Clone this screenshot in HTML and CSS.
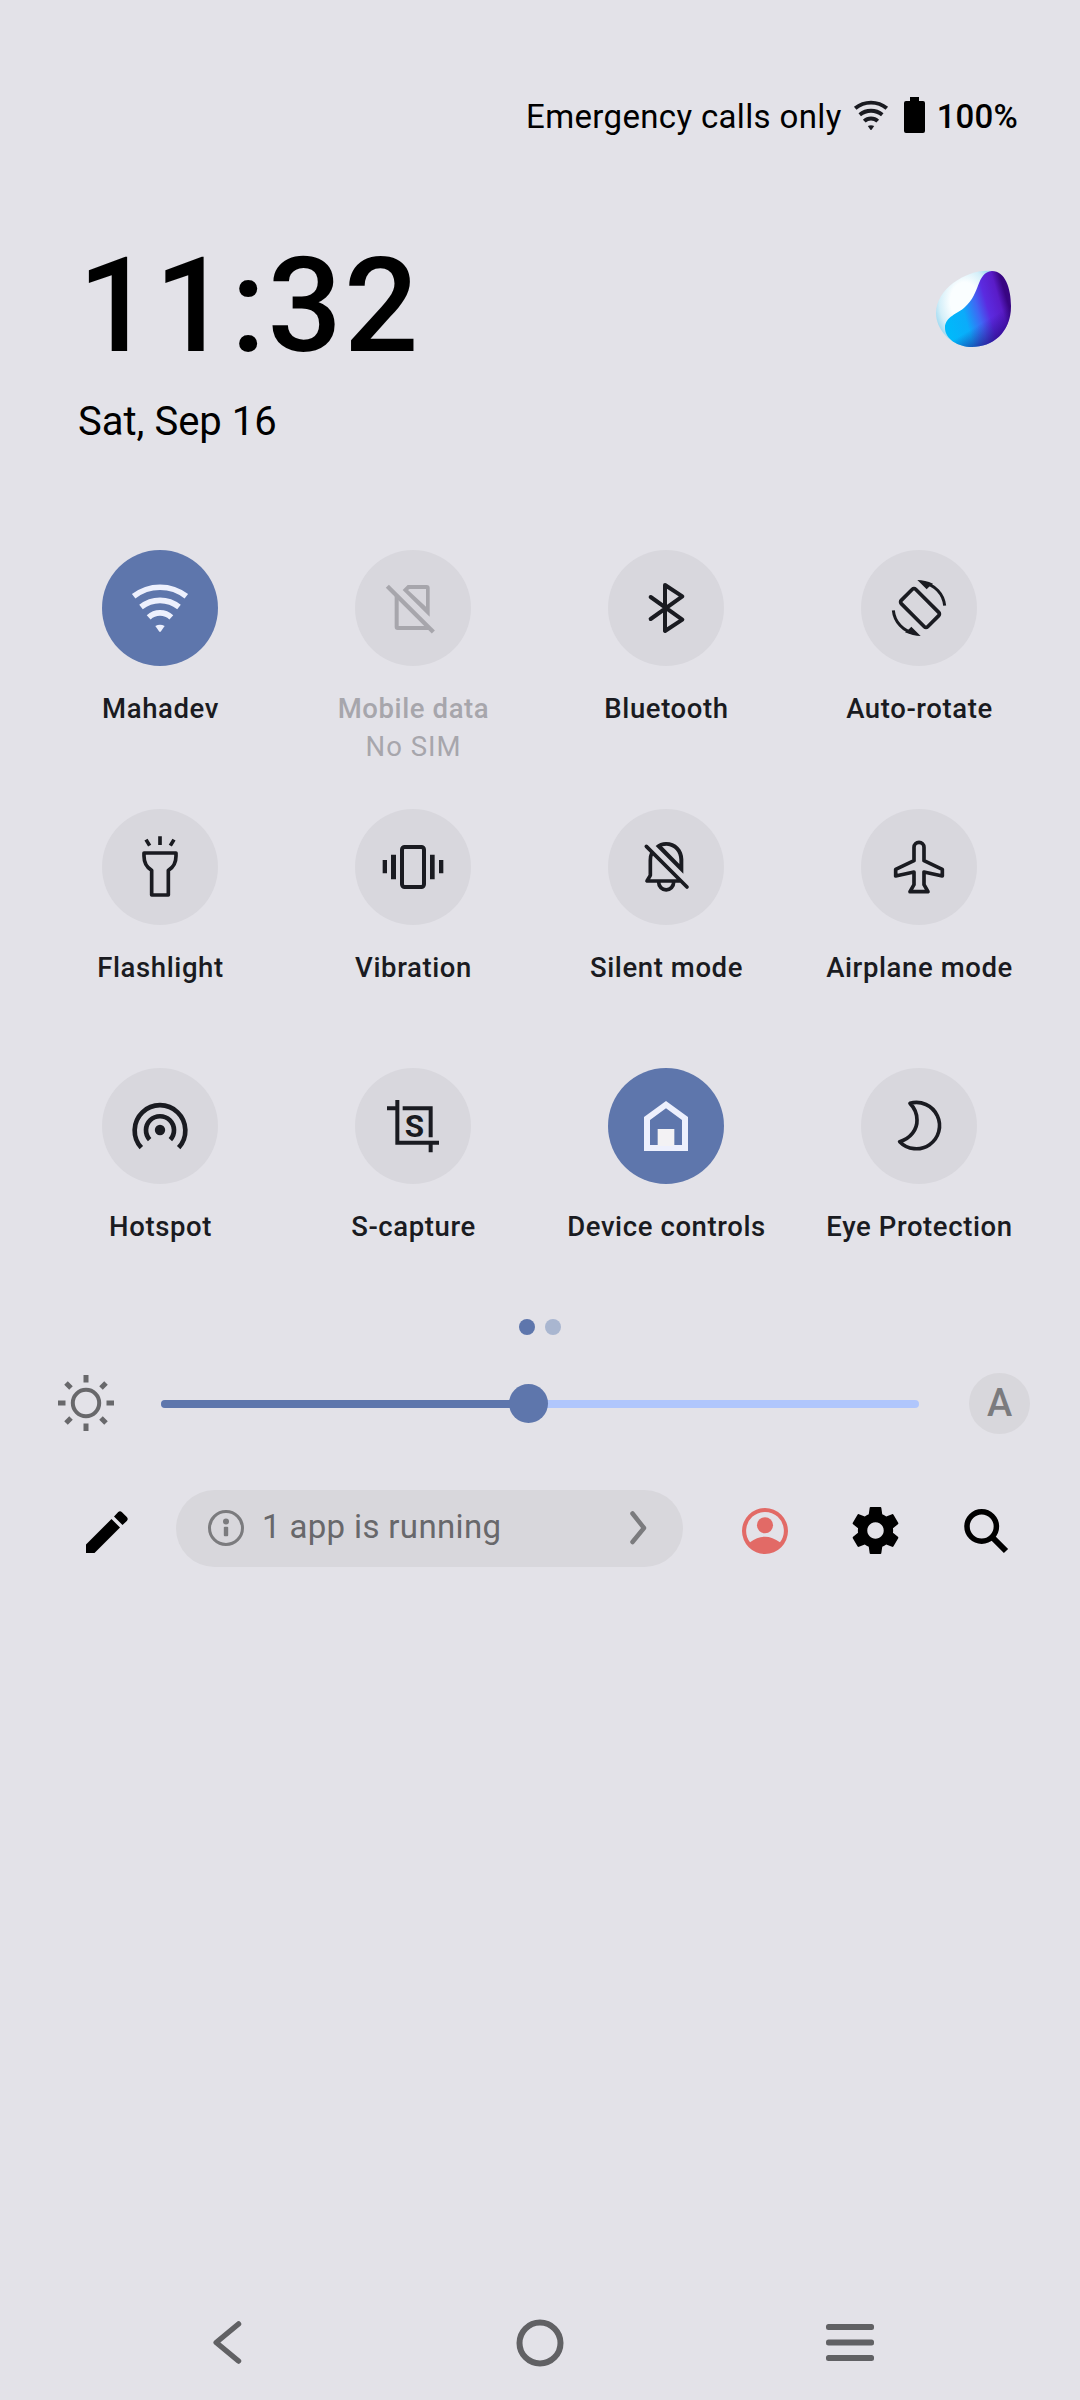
FILE: index.html
```html
<!DOCTYPE html>
<html lang="en">
<head>
<meta charset="utf-8">
<title>Quick settings</title>
<link rel="stylesheet" href="styles.css">
</head>
<body>
<main class="panel">
  <header class="status">
    <span class="carrier">Emergency calls only</span>
    <svg class="status-wifi" viewBox="-86 -72 172 150" fill="none" stroke="currentColor" stroke-width="20"><path d="M-80-36A126 126 0 0 1 80-36M-57-3A91 91 0 0 1 57-3M-34 29A49 49 0 0 1 34 29"/><path d="M-16 53Q0 46 16 53L3 72Q0 75-3 72Z" fill="currentColor" stroke="none"/></svg>
    <svg class="battery" viewBox="0 0 21 36"><path d="M6 0h9v4h4q2 0 2 2v28q0 2-2 2H2q-2 0-2-2V6q0-2 2-2h4z"/></svg>
    <span class="percent">100%</span>
  </header>

  <section class="clock-row">
    <div>
      <div class="clock">11:32</div>
      <div class="date">Sat, Sep 16</div>
    </div>
    <svg class="orb" viewBox="0 0 75 77">
      <defs>
        <radialGradient id="shell" cx=".5" cy=".4" r=".55"><stop offset=".45" stop-color="#fafeff"/><stop offset=".8" stop-color="#d4eff9"/><stop offset="1" stop-color="#a5dcf2"/></radialGradient>
        <linearGradient id="wave" x1="12" y1="58" x2="74" y2="40" gradientUnits="userSpaceOnUse"><stop offset="0" stop-color="#00b9fb"/><stop offset=".3" stop-color="#0bacfa"/><stop offset=".52" stop-color="#3f67f4"/><stop offset=".68" stop-color="#5b2be0"/><stop offset=".88" stop-color="#5a1cc8"/><stop offset="1" stop-color="#380582"/></linearGradient>
        <linearGradient id="shade" x1="42" y1="45" x2="60" y2="75" gradientUnits="userSpaceOnUse"><stop offset=".25" stop-color="#23047a" stop-opacity="0"/><stop offset="1" stop-color="#23047a" stop-opacity=".8"/></linearGradient>
      </defs>
      <path fill="url(#shell)" d="M56 1C34-2 0 17 0 43C0 59 14 76 35 77C50 60 60 30 56 1Z"/>
      <path fill="url(#wave)" d="M56 1C69 1 75 18 75 36C75 63 56 77 36 77C22 77 9 69 9 58C9 46 22 44 29 37C45 23 40 3 56 1Z"/>
      <path fill="url(#shade)" d="M56 1C69 1 75 18 75 36C75 63 56 77 36 77C22 77 9 69 9 58C9 46 22 44 29 37C45 23 40 3 56 1Z"/>
    </svg>
  </section>

  <section class="tiles">
    <div class="tile on">
      <svg class="disc" viewBox="-174 -174 348 348"><g fill="none" stroke="currentColor" stroke-width="17"><path d="M-79-35A128 128 0 0 1 79-35M-57-3A91 91 0 0 1 57-3M-34 28A50 50 0 0 1 34 28"/></g><path fill="currentColor" d="M-14 54Q0 47 14 54L3 70Q0 74-3 70Z"/></svg>
      <span class="name">Mahadev</span>
    </div>
    <div class="tile disabled">
      <svg class="disc" viewBox="-174 -174 348 348"><path fill="currentColor" fill-rule="evenodd" d="M-31-54L-16-69H41Q50-69 50-60V26ZM-15-54L-10-57H39V-4ZM-55-48V57Q-55 66-46 66H49L37 54H-43V-36Z"/><path fill="none" stroke="currentColor" stroke-width="13" d="M-77-65L61 72"/></svg>
      <span class="name">Mobile data</span>
      <span class="note">No SIM</span>
    </div>
    <div class="tile">
      <svg class="disc" viewBox="-174 -174 348 348"><path fill="none" stroke="currentColor" stroke-width="12" stroke-linejoin="round" stroke-linecap="round" d="M-46-33L49 35L-3 69V-69L49-35L-46 33"/></svg>
      <span class="name">Bluetooth</span>
    </div>
    <div class="tile">
      <svg class="disc" viewBox="-174 -174 348 348"><g fill="none" stroke="currentColor"><rect x="-56" y="-30.500" width="112" height="61" rx="7" stroke-width="11" transform="translate(3 0) rotate(45)"/><path stroke-width="9" d="M12-76A77 77 0 0 1 77-7M-12 76A77 77 0 0 1-77 7"/></g><path fill="currentColor" d="M-5-84Q18-84 42-73L32-65L23-56ZM5 84Q-18 84-42 73L-32 65L-23 56Z"/></svg>
      <span class="name">Auto-rotate</span>
    </div>

    <div class="tile">
      <svg class="disc" viewBox="-174 -174 348 348"><path fill="none" stroke="currentColor" stroke-width="11" stroke-linejoin="round" d="M0-92V-66M-42-82L-31-64M42-82L31-64M-48-42H48V-33C48-12 39 2 25 10V84H-25V10C-39 2-48-12-48-33Z"/></svg>
      <span class="name">Flashlight</span>
    </div>
    <div class="tile">
      <svg class="disc" viewBox="-174 -174 348 348"><rect x="-33" y="-60" width="66" height="120" rx="8" fill="none" stroke="currentColor" stroke-width="12"/><path fill="currentColor" d="M-66-37h15v74h-15zM-91-21h13v40h-13zM51-37h14v74h-14zM78-21h13v40h-13z"/></svg>
      <span class="name">Vibration</span>
    </div>
    <div class="tile">
      <svg class="disc" viewBox="-174 -174 348 348"><path fill="currentColor" fill-rule="evenodd" d="M-31-63Q-18-75 0-75C30-75 52-53 52-23V20ZM-12-62Q-5-64 2-64C26-62 40-45 40-22V-9Z"/><path fill="none" stroke="currentColor" stroke-width="11" stroke-linecap="round" stroke-linejoin="round" d="M-59-62L63 60M-42-43Q-47-33-47-20V25L-57 42H40M-22 46A22 22 0 0 0 23 46"/></svg>
      <span class="name">Silent mode</span>
    </div>
    <div class="tile">
      <svg class="disc" viewBox="-174 -174 348 348"><path fill="none" stroke="currentColor" stroke-width="11" stroke-linejoin="round" d="M-15-59A15 15 0 0 1 15-59V-19L70 7V27L15 15V53L27 74H-27L-15 53V15L-70 27V7L-15-19Z"/></svg>
      <span class="name">Airplane mode</span>
    </div>

    <div class="tile">
      <svg class="disc" viewBox="-174 -174 348 348"><circle cy="12" r="15.500" fill="currentColor"/><path fill="none" stroke="currentColor" stroke-width="14" d="M-31 41A42 42 0 1 1 31 41M-56 65A76 76 0 1 1 56 65"/></svg>
      <span class="name">Hotspot</span>
    </div>
    <div class="tile">
      <svg class="disc" viewBox="-174 -174 348 348"><path fill="none" stroke="currentColor" stroke-width="12" d="M-78-53H-53M-47-78V50H78M-31-53H53V34M53 56V79"/><text class="glyph" x="4" y="33" text-anchor="middle">S</text></svg>
      <span class="name">S-capture</span>
    </div>
    <div class="tile on">
      <svg class="disc" viewBox="-174 -174 348 348"><path fill="currentColor" fill-rule="evenodd" d="M0-75L66-27V75H-66V-27ZM0-53L48-18V57H-48V-18Z"/><path fill="#f3f2f4" d="M-25 9H25V60H-25Z"/></svg>
      <span class="name">Device controls</span>
    </div>
    <div class="tile">
      <svg class="disc" viewBox="-174 -174 348 348"><path fill="none" stroke="currentColor" stroke-width="11" stroke-linejoin="round" d="M-27-68A69.500 69.500 0 1 1-58 47C-25 37-5 10-6-18C-6-38-14-55-27-68Z"/></svg>
      <span class="name">Eye Protection</span>
    </div>
  </section>

  <div class="pages"><i class="dot current"></i><i class="dot"></i></div>

  <section class="brightness">
    <svg class="sun" viewBox="-28 -28 56 56" fill="none" stroke="currentColor"><circle r="13.200" stroke-width="4"/><path stroke-width="5" d="M0-28V-20.500M0 28V20.500M-28 0H-20.500M28 0H20.500M-20-20L-15-15M20-20L15-15M-20 20L-15 15M20 20L15 15"/></svg>
    <div class="slider"><div class="fill"></div><div class="thumb"></div></div>
    <div class="auto">A</div>
  </section>

  <footer class="actions">
    <svg class="edit" viewBox="0 0 42 42"><path d="M0 33.500L25.500 8L34 16.500L8.500 42H0ZM28 5.500L32 1.200Q34 -.8 36 1.200L40.800 6Q42.600 8 40.800 10L36.500 14Z"/></svg>
    <div class="running">
      <svg class="info" viewBox="-18 -18 36 36"><circle r="16.500" fill="none" stroke="currentColor" stroke-width="3"/><circle cy="-6.500" r="3" fill="currentColor"/><rect x="-2.200" y="-1.200" width="4.400" height="9.400" rx="1" fill="currentColor"/></svg>
      <span class="running-text">1 app is running</span>
      <svg class="chevron" viewBox="0 0 17 34"><path fill="none" stroke="currentColor" stroke-width="4.500" stroke-linecap="round" stroke-linejoin="round" d="M2.500 2.500L14 17L2.500 31"/></svg>
    </div>
    <svg class="user" viewBox="2 2 20 20"><path fill="currentColor" fill-rule="evenodd" d="M12 2a10 10 0 1 0 0 20a10 10 0 0 0 0-20zM5.500 16.900a8.200 8.200 0 1 1 13 0Q12 12 5.500 16.900z"/><circle cx="12" cy="9.500" r="3.500" fill="currentColor"/></svg>
    <svg class="gear" viewBox="2 2 20 20"><path d="M19.430 12.980c.04-.32.070-.64.070-.98s-.03-.66-.07-.98l2.110-1.650c.19-.15.240-.42.120-.64l-2-3.460c-.12-.22-.39-.3-.61-.22l-2.490 1c-.52-.4-1.080-.73-1.690-.98l-.38-2.650C14.460 2.180 14.250 2 14 2h-4c-.25 0-.46.180-.49.420l-.38 2.650c-.61.250-1.170.59-1.690.98l-2.490-1c-.23-.09-.49 0-.61.220l-2 3.460c-.13.220-.07.490.12.640l2.110 1.650c-.04.320-.07.650-.07.980s.03.660.07.980l-2.110 1.650c-.19.150-.24.420-.12.640l2 3.460c.12.220.39.300.61.220l2.490-1c.52.400 1.080.730 1.690.980l.38 2.650c.03.240.24.420.49.420h4c.25 0 .46-.18.490-.42l.38-2.650c.61-.25 1.170-.59 1.690-.98l2.490 1c.23.090.49 0 .61-.22l2-3.460c.12-.22.070-.49-.12-.64l-2.110-1.650zM12 15.500c-1.930 0-3.500-1.570-3.500-3.500s1.570-3.500 3.500-3.500 3.500 1.570 3.500 3.500-1.570 3.500-3.500 3.500z"/></svg>
    <svg class="search" viewBox="0 0 45 44" fill="none" stroke="currentColor"><circle cx="17.700" cy="17.500" r="14.700" stroke-width="5.500"/><path stroke-width="6" d="M27.500 27.500L42 42"/></svg>
  </footer>

  <nav class="nav">
    <svg class="back" viewBox="0 0 29 43"><path fill="none" stroke="currentColor" stroke-width="5.500" stroke-linecap="round" stroke-linejoin="round" d="M25.500 3L3.200 21.500L25.500 40"/></svg>
    <svg class="home" viewBox="-24 -24 48 48"><circle r="20.500" fill="none" stroke="currentColor" stroke-width="6"/></svg>
    <svg class="recents" viewBox="0 0 48 37" fill="currentColor"><rect width="48" height="6" rx="2.500"/><rect y="15.500" width="48" height="6" rx="2.500"/><rect y="31" width="48" height="6" rx="2.500"/></svg>
  </nav>
</main>
</body>
</html>
```

FILE: styles.css
```css
* { box-sizing: border-box; }
body {
  margin: 0;
  background: #e3e2e8;
  color: #000;
  font-family: Roboto, "Liberation Sans", sans-serif;
}
svg { display: block; flex: none; overflow: visible; }
.panel {
  display: flex;
  flex-direction: column;
  width: 1080px;
  height: 2400px;
}

/* Status bar */
.status {
  display: flex;
  justify-content: flex-end;
  align-items: center;
  height: 42px;
  margin-top: 96px;
  padding-right: 62px;
  font-size: 33px;
  line-height: 42px;
  white-space: nowrap;
}
.carrier { letter-spacing: .35px; }
.status-wifi { width: 34px; height: 30px; margin: -3px 0 0 12px; color: #1a1b21; }
.battery { width: 21px; height: 36px; margin: -4px 12px 0 16px; }
.percent { font-weight: 500; letter-spacing: .2px; }

/* Clock */
.clock-row {
  display: flex;
  justify-content: space-between;
  height: 310px;
  margin-top: 102px;
  padding: 0 69px 0 78px;
}
.clock { margin-top: 1px; font-size: 131px; font-weight: 500; line-height: 130px; letter-spacing: 2px; }
.date { margin-top: 28px; font-size: 40px; line-height: 46px; }
.orb { width: 75px; height: 77px; margin-top: 30px; }

/* Tiles */
.tiles {
  display: grid;
  grid-template-columns: repeat(4, 253px);
  grid-auto-rows: 259px;
  padding-left: 33px;
}
.tile {
  display: flex;
  flex-direction: column;
  align-items: center;
  color: #1a1b21;
  font-size: 27.500px;
  line-height: 38px;
  letter-spacing: .6px;
  white-space: nowrap;
}
.disc {
  width: 116px;
  height: 116px;
  margin-bottom: 24px;
  border-radius: 50%;
  background: #d8d7dd;
}
.on .disc { background: #5e76ac; color: #edf0fd; }
.disabled { color: #a7a6ac; }
.name { margin-left: 2px; font-weight: 500; }
.note { margin-left: 2px; letter-spacing: 1px; }
.glyph { font-size: 94px; font-weight: 700; fill: currentColor; letter-spacing: 0; }

.pages { display: flex; justify-content: center; gap: 10px; height: 16px; margin-top: -8px; }
.dot { width: 16px; height: 16px; border-radius: 50%; background: #a9b6d0; }
.dot.current { background: #5e76ac; }

/* Brightness */
.brightness {
  display: flex;
  align-items: center;
  height: 61px;
  margin-top: 38px;
  padding: 0 50px 0 58px;
}
.sun { width: 56px; height: 56px; margin-top: -1px; color: #68686b; }
.slider {
  display: flex;
  align-items: center;
  width: 758px;
  height: 8px;
  margin: 1px 50px 0 47px;
  border-radius: 4px;
  background: #b0c6fc;
}
.fill { width: 358px; height: 8px; border-radius: 4px 0 0 4px; background: #5e76ac; }
.thumb { width: 39px; height: 39px; margin: -1px 0 0 -10px; border-radius: 50%; background: #5e76ac; }
.auto {
  width: 61px;
  height: 61px;
  border-radius: 50%;
  background: #d8d7dc;
  color: #7b7b7e;
  font-size: 38px;
  font-weight: 500;
  line-height: 61px;
  text-align: center;
}

/* Actions */
.actions {
  display: flex;
  align-items: center;
  height: 77px;
  margin-top: 56px;
  padding-left: 86px;
}
.edit { width: 42px; height: 42px; margin: 7px 48px 0 0; }
.running {
  display: flex;
  align-items: center;
  width: 507px;
  height: 77px;
  padding: 0 36px 2px 32px;
  border-radius: 39px;
  background: #d8d7dc;
  color: #68686b;
  font-size: 33px;
  letter-spacing: .35px;
}
.info { width: 36px; height: 36px; margin-right: 18px; color: #7b7b7e; }
.running-text { margin-top: -2px; }
.chevron { width: 17px; height: 34px; margin-left: auto; color: #7b7b7e; }
.user { width: 46px; height: 46px; margin: 4px 0 0 59px; color: #e26a66; }
.gear { width: 47px; height: 47px; margin: 4px 0 0 64px; }
.search { width: 45px; height: 44px; margin: 4px 0 0 65px; }

/* Navigation */
.nav {
  display: flex;
  align-items: center;
  justify-content: space-between;
  height: 115px;
  margin-top: auto;
  padding: 0 206px 0 213px;
  color: #616164;
}
.back { width: 29px; height: 43px; }
.home { width: 48px; height: 48px; margin-left: 12px; }
.recents { width: 48px; height: 37px; }
```
